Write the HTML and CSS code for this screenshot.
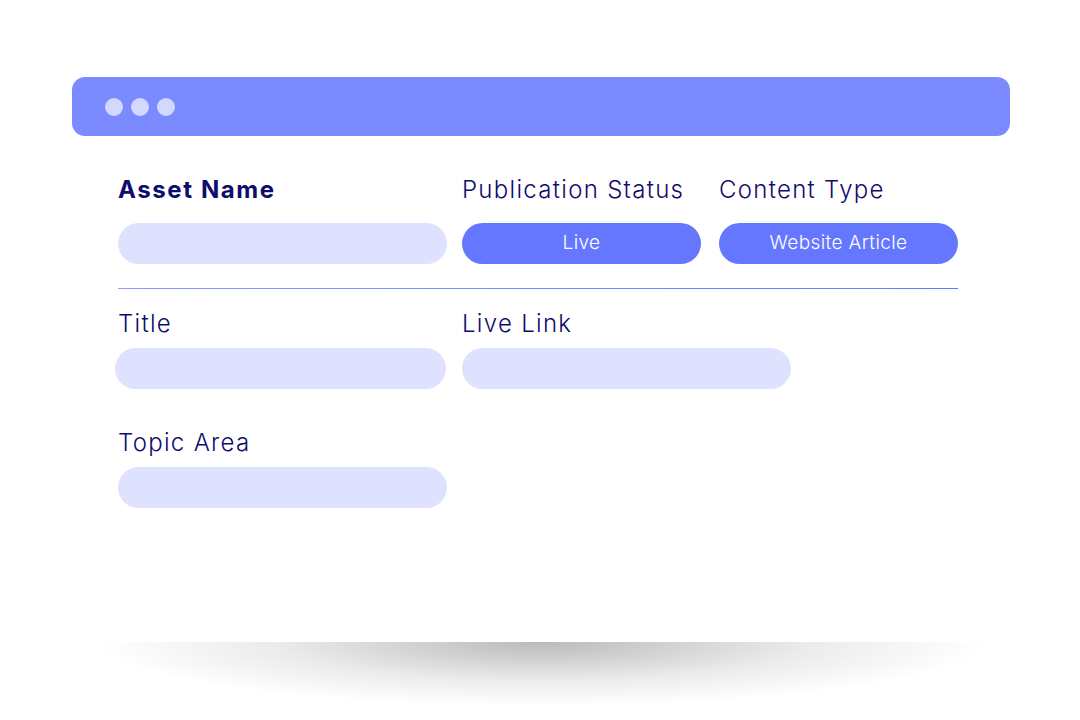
FILE: index.html
```html
<!DOCTYPE html>
<html lang="en">
<head>
    <meta charset="UTF-8">
    <meta name="viewport" content="width=device-width, initial-scale=1.0">
    <title>Asset Details</title>
    <link rel="stylesheet" href="styles.css">
</head>
<body>

    <div class="window">
        <!-- Browser bar -->
        <div class="window-bar">
            <span class="dot"></span>
            <span class="dot"></span>
            <span class="dot"></span>
        </div>

        <div class="card">
            <div class="row row-top">
                <div class="field field-wide">
                    <div class="label label-bold">Asset Name</div>
                    <div class="input"></div>
                </div>
                <div class="field field-narrow">
                    <div class="label">Publication Status</div>
                    <div class="pill">Live</div>
                </div>
                <div class="field field-narrow field-last">
                    <div class="label">Content Type</div>
                    <div class="pill">Website Article</div>
                </div>
            </div>

            <div class="divider"></div>

            <div class="row">
                <div class="field field-wide">
                    <div class="label">Title</div>
                    <div class="input input-title"></div>
                </div>
                <div class="field field-wide">
                    <div class="label">Live Link</div>
                    <div class="input"></div>
                </div>
            </div>

            <div class="row row-topic">
                <div class="field field-wide">
                    <div class="label">Topic Area</div>
                    <div class="input"></div>
                </div>
            </div>
        </div>

        <!-- soft shadow under the card -->
        <div class="card-shadow"></div>
    </div>

</body>
</html>
```

FILE: styles.css
```css
body {
    margin: 0;
    background: #fff;
    font-family: Inter, Lato, sans-serif;
    color: #0f0c6e;
}

.window {
    width: 938px;
    margin: 77px 0 0 72px;
}

.window-bar {
    height: 59px;
    background-color: #7b8bff;
    border-radius: 13px;
    display: flex;
    align-items: center;
    gap: 8px;
    padding-left: 33px;
}

.dot {
    width: 18px;
    height: 18px;
    border-radius: 50%;
    background-color: #d3d8ff;
}

.card {
    box-sizing: border-box;
    height: 506px;
    padding: 39px 52px 0 46px;
    background: #fff;
}

.card-shadow {
    height: 64px;
    margin: 0 23px;
    background: radial-gradient(ellipse 50% 100% at 50% 0, rgba(0, 0, 0, 0.27), rgba(0, 0, 0, 0.08) 60%, rgba(0, 0, 0, 0) 100%);
}

.row {
    display: flex;
    gap: 15px;
}

.row-top .field-last {
    margin-left: 3px;
}

.field {
    display: flex;
    flex-direction: column;
    gap: 9px;
}

.row-top .field {
    gap: 18px;
}

.field-wide {
    width: 329px;
}

.field-narrow {
    width: 239px;
}

.label {
    font-size: 24px;
    line-height: 30px;
    font-weight: 300;
    letter-spacing: 1.3px;
    white-space: nowrap;
}

.label-bold {
    font-weight: 700;
    letter-spacing: 1.6px;
}

.input {
    height: 41px;
    border-radius: 21px;
    background-color: #dfe2fe;
}

.input-title {
    margin: 0 1px 0 -3px;
}

.pill {
    height: 41px;
    border-radius: 21px;
    background-color: #6677ff;
    color: #fff;
    font-size: 19px;
    font-weight: 300;
    letter-spacing: 0.4px;
    line-height: 40px;
    text-align: center;
}

.divider {
    height: 1px;
    margin: 24px 0 20px;
    background: linear-gradient(to right, #8d9bff, #6677ff);
}

.row-topic {
    margin-top: 39px;
}
```
